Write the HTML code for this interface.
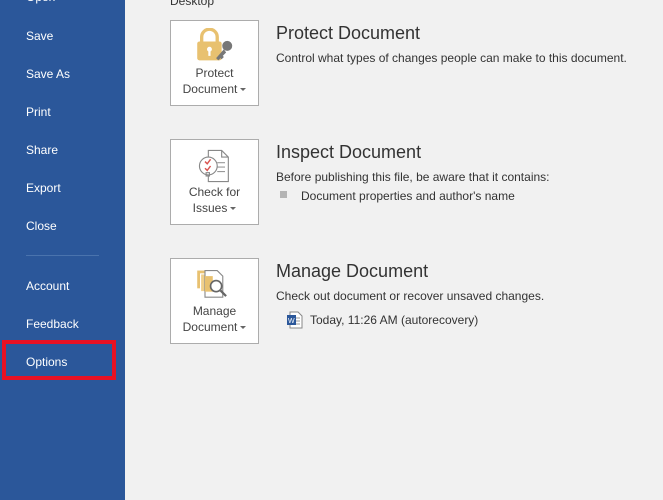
<!DOCTYPE html>
<html><head><meta charset="utf-8"><style>
*{margin:0;padding:0;box-sizing:border-box}
body{width:663px;height:500px;overflow:hidden;background:#f1f1f1;font-family:"Liberation Sans",sans-serif;position:relative;color:#444}
#side{position:absolute;left:0;top:0;width:125px;height:500px;background:#2b579a}
.it{position:absolute;left:26px;color:#fff;font-size:12px;line-height:14px}
.sep{position:absolute;left:26px;top:255px;width:73px;height:1px;background:#4a73ad}
.red{position:absolute;left:2px;top:340px;width:114px;height:40px;border:4px solid #e81123}
.btn{position:absolute;left:170px;width:89px;height:86px;border:1px solid #acacac;background:#fff;text-align:center;font-size:12px;line-height:16px;color:#444}
.btn svg{position:absolute;left:24px;top:7px}
.btn .lbl{position:absolute;left:0;right:0;top:44px}
.car{display:inline-block;width:0;height:0;border-left:3px solid transparent;border-right:3px solid transparent;border-top:3px solid #666;vertical-align:middle;margin-left:3px}
.t{position:absolute;left:276px;font-size:18px;color:#333;font-weight:normal}
.d{position:absolute;left:276px;font-size:12px;color:#333}
</style></head><body>
<div id="side">
<div class="it" style="top:-10px">Open</div>
<div class="it" style="top:29px">Save</div>
<div class="it" style="top:67px">Save As</div>
<div class="it" style="top:105px">Print</div>
<div class="it" style="top:143px">Share</div>
<div class="it" style="top:181px">Export</div>
<div class="it" style="top:219px">Close</div>
<div class="sep"></div>
<div class="it" style="top:279px">Account</div>
<div class="it" style="top:317px">Feedback</div>
<div class="it" style="top:355px">Options</div>
</div>
<div class="red"></div>
<div class="d" style="top:-6px;left:170px">Desktop</div>

<div class="btn" style="top:20px">
<svg width="40" height="38" viewBox="0 0 36 34"><path d="M6 12V8a7 7 0 0 1 14 0v4" fill="none" stroke="#e8c170" stroke-width="3"/><rect x="2" y="12" width="22" height="17" rx="2" fill="#e8c170"/><circle cx="13" cy="19" r="2.2" fill="#fff"/><rect x="12" y="19" width="2" height="6" fill="#fff"/><circle cx="29" cy="16" r="4.5" fill="#777"/><path d="M26 19l-7 8 2 2 2-2 1 1 2-2-1-1 3-3z" fill="#777"/></svg>
<div class="lbl">Protect<br>Document<span class="car"></span></div></div>
<div class="t" style="top:23px">Protect Document</div>
<div class="d" style="top:51px">Control what types of changes people can make to this document.</div>

<div class="btn" style="top:139px">
<svg width="40" height="38" viewBox="0 0 36 34"><path d="M12 3h12l6 6v22H12z" fill="#fff" stroke="#888"/><path d="M24 3v6h6" fill="none" stroke="#888"/><path d="M20 14h7M20 18h7M20 22h7" stroke="#999"/><circle cx="12" cy="17" r="8" fill="#fff" stroke="#888"/><path d="M9 13l2 2 3-4M9 19l2 2 3-4" fill="none" stroke="#d9534f" stroke-width="1.3"/><rect x="10" y="23" width="3" height="3" fill="none" stroke="#888"/></svg>
<div class="lbl">Check for<br>Issues<span class="car"></span></div></div>
<div class="t" style="top:142px">Inspect Document</div>
<div class="d" style="top:170px">Before publishing this file, be aware that it contains:</div>
<div style="position:absolute;left:280px;top:191px;width:7px;height:7px;background:#b4b4b4"></div>
<div class="d" style="top:189px;left:301px">Document properties and author's name</div>

<div class="btn" style="top:258px">
<svg width="40" height="38" viewBox="0 0 36 34"><rect x="2" y="4" width="12" height="16" fill="#e8c170"/><rect x="5" y="7" width="12" height="16" fill="#f0d08c" stroke="#fff"/><path d="M9 4h11l5 5v19H9z" fill="#fff" stroke="#888"/><path d="M9 9h7v14H9z" fill="#e8c170"/><circle cx="19" cy="18" r="5" fill="#fff" stroke="#666" stroke-width="1.5"/><path d="M23 22l5 5" stroke="#666" stroke-width="2"/></svg>
<div class="lbl">Manage<br>Document<span class="car"></span></div></div>
<div class="t" style="top:261px">Manage Document</div>
<div class="d" style="top:289px">Check out document or recover unsaved changes.</div>
<svg style="position:absolute;left:286px;top:311px" width="18" height="18" viewBox="0 0 18 18"><path d="M4 1h8l4 4v12H4z" fill="#fff" stroke="#888"/><path d="M9 7h5M9 10h5M9 13h5" stroke="#999"/><rect x="1" y="4" width="9" height="10" fill="#2b579a"/><text x="2" y="12" font-size="7" fill="#fff" font-family="Liberation Sans">W</text></svg>
<div class="d" style="top:313px;left:310px">Today, 11:26 AM (autorecovery)</div>
</body></html>
